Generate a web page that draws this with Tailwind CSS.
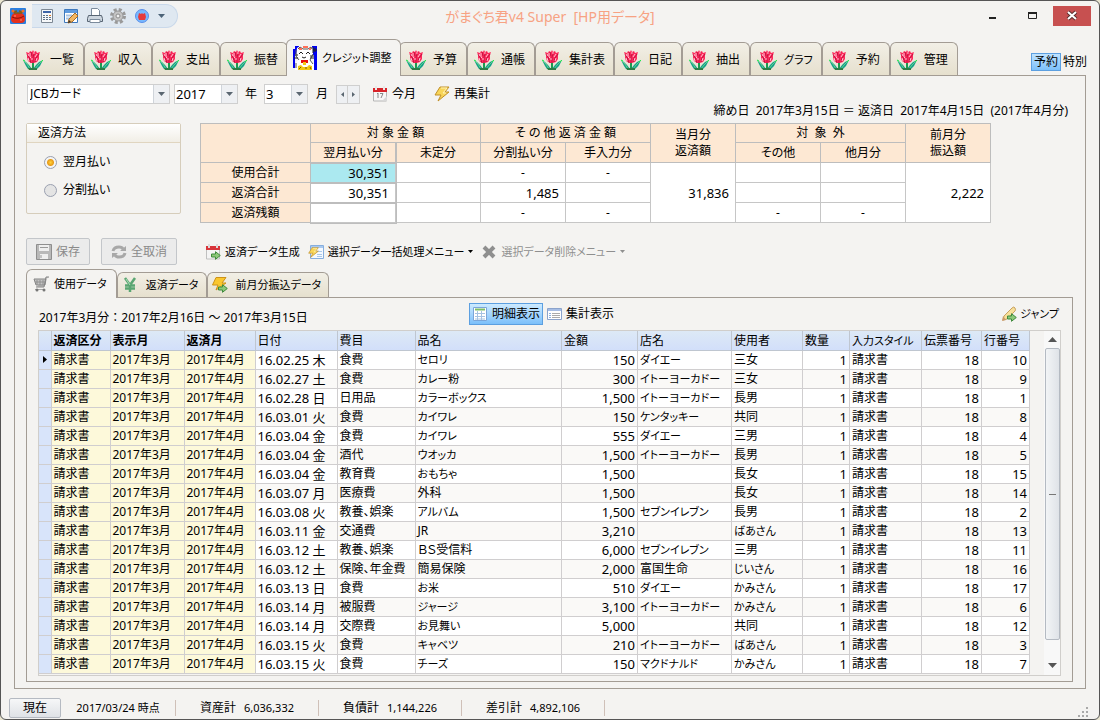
<!DOCTYPE html>
<html lang="ja">

<head>
  <meta charset="UTF-8" />
  <meta name="viewport" content="width=device-width, initial-scale=1.0" />
  <title>がまぐち君v4 Super [HP用データ]</title>
  <script src="https://cdn.jsdelivr.net/npm/@tailwindcss/browser@4"></script>
</head>

<body class="bg-[#e9e5d0] font-['Noto_Sans','Noto_Sans_CJK_JP',sans-serif] text-xs leading-4 text-black [font-feature-settings:'palt']">

  <!-- Shared icons -->
  <svg class="hidden">
    <symbol id="tulip" viewBox="0 0 20 20">
      <path d="M10 11v8" stroke="#1c9a50" stroke-width="2" />
      <path d="M0 10l3 2 3 3 3 4H5l-2-3z" fill="#14a088" />
      <path d="M20 10l-4 2-3 3-3 4h4l3-3z" fill="#14a088" />
      <path d="M1 11l3 3 3 5M19 11l-4 4-3 4" stroke="#5fd08c" fill="none" />
      <path d="M18 12l2-2M0 10l2 1" stroke="#22ee44" />
      <path d="M5 18h9v2H6z" fill="#2c7d46" />
      <path d="M3 2l3 1 1-2 2 1 1-2 1 2 2-1 1 2 3-1-1 3v4l-2 3-3 1H8l-3-2-1-3V5z" fill="#ff2a5c" />
      <path d="M4 4l2 3 2 6M16 4l-3 4-1 4M8 2l1 4M12 2l-2 5v6" stroke="#c01440" fill="none" />
      <path d="M5 4l1 2M7 3v4l1 1M11 2v2M14 4l-2 3M14 8l-1 3M9 8v2M5 8l1 3" stroke="#ffc0d0" fill="none" />
    </symbol>
    <symbol id="down" viewBox="0 0 7 4"><path d="M0 0h7L3.5 4z" fill="currentColor" /></symbol>
    <symbol id="bolt" viewBox="0 0 16 16">
      <path d="M6 1h9l-4 5h4L4 15l3-6H1z" fill="#f8d558" stroke="#c08f28" />
      <path d="M7 2h6L9 7h3" stroke="#fff3b8" fill="none" />
    </symbol>
    <symbol id="arrow" viewBox="0 0 10 9">
      <path d="M.5 3h4V.7L9.3 4.500 4.500 8.300V6h-4z" fill="#8cc878" stroke="#3f8a3c" />
    </symbol>
  </svg>

  <div class="flex h-screen flex-col overflow-hidden rounded-md border border-[#555] bg-[#f4f3f1]">

    <!-- Title bar -->
    <header class="grid h-[38px] shrink-0 grid-cols-[1fr_auto_1fr] items-start">
      <div class="flex items-center gap-[6px] pt-[3px] pl-[9px]">
        <svg class="size-4" viewBox="0 0 16 16">
          <rect width="16" height="16" rx="1" fill="#2a7fe0" />
          <path d="M4 5q-3 2-3 6 0 4 4 4h6q4 0 4-4 0-4-3-6z" fill="#e5301c" />
          <path d="M2 9q6 3 12-1" stroke="#8e1208" fill="none" />
          <path d="M3 4l4-1M13 4L9 3M4 5h8" stroke="#7d5d18" stroke-width="1.500" />
          <circle cx="3" cy="3" r="1.500" fill="#f0702a" /><circle cx="13" cy="3" r="1.500" fill="#f0702a" />
          <path d="M4 8h2M10 12h2" stroke="#ff8a70" />
        </svg>
        <nav class="flex h-6 w-[146px] items-center justify-between rounded-r-full border-y border-r border-[#c9d8ea] bg-[#dfe8f1] pr-3 pl-[7px]">
          <button aria-label="電卓">
            <svg class="size-4" viewBox="0 0 16 16">
              <path d="M2.500 1.500h11v13h-11z" fill="#f6f8fa" stroke="#7d8894" />
              <path d="M4 3h8v2H4z" fill="#3f66a8" />
              <path d="M4 7.500h2M7 7.500h2M4 9.500h2M7 9.500h2M4 11.500h2M7 11.500h2M10 9.500h2M10 11.500h2" stroke="#5f7186" />
              <path d="M10 7.500h2" stroke="#e07820" />
            </svg>
          </button>
          <button aria-label="メモ">
            <svg class="size-4" viewBox="0 0 16 16">
              <path d="M1.500 1.500h13v13h-13z" fill="#fff" stroke="#3d78bd" />
              <path d="M2 2h12v3H2z" fill="#5e9ade" />
              <path d="M3 7.500h6M3 10.500h4" stroke="#a8c4e4" stroke-width="2" />
              <path d="M5 15l1-4 6-6 3 3-6 6z" fill="#f2b662" stroke="#a66a24" />
              <path d="M5 15l1-3 2 2z" fill="#333" />
            </svg>
          </button>
          <button aria-label="印刷">
            <svg class="size-4" viewBox="0 0 16 16">
              <path d="M4.500 7.500v-7h6l2 2v5" fill="#fff" stroke="#7b8b9c" />
              <path d="M1.500 7.500h13l1 3v3H.5v-3z" fill="#cdd6df" stroke="#586573" />
              <path d="M3 11.500h10v3H3z" fill="#fff" stroke="#7b8b9c" />
            </svg>
          </button>
          <button aria-label="設定">
            <svg class="size-4" viewBox="0 0 16 16">
              <circle cx="8" cy="8" r="6.500" fill="none" stroke="#9a9a9a" stroke-width="3" stroke-dasharray="3 2.100" />
              <circle cx="8" cy="8" r="5" fill="#c4c4c4" stroke="#969696" />
              <circle cx="8" cy="8" r="2" fill="#f0f0f0" stroke="#8c8c8c" />
            </svg>
          </button>
          <button aria-label="がまぐち">
            <svg class="size-4" viewBox="0 0 16 16">
              <circle cx="8" cy="8" r="6.500" fill="#77b8ff" stroke="#5b8fe8" />
              <path d="M5 5l2 1 1-1 1 1 2-1 1 4-1 3H5L4 9z" fill="#e63a3c" />
            </svg>
          </button>
          <button aria-label="カスタマイズ" class="text-[#4c6378]"><svg class="h-1 w-[7px]"><use href="#down" /></svg></button>
        </nav>
      </div>
      <h1 class="pt-[6px] text-sm leading-5 text-[#f7a283]">がまぐち君v4 Super&nbsp; [HP用データ]</h1>
      <div class="flex items-start justify-end pt-[5px] pr-2">
        <button aria-label="最小化" class="flex h-5 w-10 items-center justify-center"><svg class="h-3 w-4" viewBox="0 0 16 12"><path d="M4 7h7v2H4z" fill="#222" /></svg></button>
        <button aria-label="最大化" class="flex h-5 w-10 items-center justify-center"><svg class="h-3 w-4" viewBox="0 0 16 12"><path d="M3.500 3v5.500h8V3" fill="none" stroke="#222" /><path d="M3 2h9v2H3z" fill="#222" /></svg></button>
        <button aria-label="閉じる" class="flex h-5 w-[38px] items-center justify-center bg-[#c75050]">
          <svg class="h-3 w-3" viewBox="0 0 12 12"><path d="M2 2l8 7M10 2L2 9" stroke="#5c3030" stroke-width="4" /><path d="M2 2l8 7M10 2L2 9" stroke="#fff" stroke-width="2" /></svg>
        </button>
      </div>
    </header>

    <!-- Main tabs -->
    <div class="flex h-9 shrink-0 items-end pr-[10px] pl-[15px]">
      <div id="mainTabs" class="z-10 flex items-end" role="tablist"></div>
      <div class="mb-1 ml-auto flex items-center">
        <button class="h-[18px] border border-[#5c9fe0] bg-linear-to-b from-[#bfe3ff] to-[#7cc0fa] px-[2px] leading-4">予約</button>
        <button class="h-[18px] px-[2px] leading-4">特別</button>
      </div>
    </div>

    <main class="mx-[13px] flex min-h-0 flex-1 flex-col border border-[#a39c94] pt-2 pr-3 pb-[6px] pl-[11px]">

      <!-- Period selection -->
      <div class="flex h-5 shrink-0 items-center pl-px whitespace-nowrap">
        <div class="flex h-5 w-[143px] items-center border border-[#cfcfcf] bg-white">
          <select aria-label="カード" class="h-full min-w-0 flex-1 appearance-none pl-[2px]"><option>JCBカード</option></select>
          <span class="flex h-full w-4 items-center justify-center border-l border-[#cfd4da] bg-[#eef0f3] text-[#5a6670]"><svg class="h-1 w-[7px]"><use href="#down" /></svg></span>
        </div>
        <div class="ml-1 flex h-5 w-16 items-center border border-[#cfcfcf] bg-white">
          <select id="year" class="h-full min-w-0 flex-1 appearance-none pl-px text-[13px]"><option>2017</option></select>
          <span class="flex h-full w-4 items-center justify-center border-l border-[#cfd4da] bg-[#eef0f3] text-[#5a6670]"><svg class="h-1 w-[7px]"><use href="#down" /></svg></span>
        </div>
        <label for="year" class="px-[7px]">年</label>
        <div class="flex h-5 w-11 items-center border border-[#cfcfcf] bg-white">
          <select id="month" class="h-full min-w-0 flex-1 appearance-none pl-px text-[13px]"><option>3</option></select>
          <span class="flex h-full w-4 items-center justify-center border-l border-[#cfd4da] bg-[#eef0f3] text-[#5a6670]"><svg class="h-1 w-[7px]"><use href="#down" /></svg></span>
        </div>
        <label for="month" class="px-2">月</label>
        <div class="flex h-[19px] border border-[#cfcfcf] bg-[#eef0f3]">
          <button aria-label="前月" class="flex w-[11px] items-center justify-center border-r border-[#cfcfcf]"><svg class="h-[5px] w-[3px]" viewBox="0 0 3 5"><path d="M3 0v5L0 2.500z" fill="#5a6670" /></svg></button>
          <button aria-label="翌月" class="flex w-[11px] items-center justify-center"><svg class="h-[5px] w-[3px]" viewBox="0 0 3 5"><path d="M0 0v5l3-2.500z" fill="#5a6670" /></svg></button>
        </div>
        <button class="ml-3 flex items-center gap-1">
          <svg class="size-4" viewBox="0 0 16 16">
            <path d="M1.500 4h13v11h-13z" fill="#f7f7f7" stroke="#b5b5b5" />
            <path d="M1 2h14v4H1z" fill="#d8242a" />
            <path d="M4 0v4M12 0v4" stroke="#e8e8e8" stroke-width="2" />
            <path d="M5 8l1-1v5M8 7.500h3L9 12" stroke="#888" fill="none" />
            <path d="M10 15l5-5v5z" fill="#d8d8d8" />
          </svg>今月
        </button>
        <button class="ml-[18px] flex items-center gap-1"><svg class="size-4"><use href="#bolt" /></svg>再集計</button>
      </div>
      <p class="h-[14px] shrink-0 pr-[5px] text-right leading-[14px] [font-feature-settings:normal]">締め日&nbsp; 2017年3月15日 ＝ 返済日&nbsp; 2017年4月15日&nbsp; (2017年4月分)</p>

      <!-- Summary -->
      <div class="mt-[5px] flex shrink-0 items-start gap-[19px]">
        <fieldset class="h-[91px] w-[155px] rounded-xs border border-[#d6cdbb]">
          <div class="h-[19px] border-b border-[#e0d5c0] bg-linear-to-b from-white to-[#f1eee6] pl-[11px] leading-[18px]">返済方法</div>
          <div class="flex flex-col gap-3 pt-[11px] pl-[17px]">
            <label class="flex items-center gap-[6px]"><input type="radio" name="method" checked class="size-[13px] appearance-none rounded-full border border-[#9aa0b0] bg-[#e9eaec] checked:bg-[radial-gradient(circle,#ffd23a_0,#e89b18_3px,#f4f4f4_4px)]" />翌月払い</label>
            <label class="flex items-center gap-[6px]"><input type="radio" name="method" class="size-[13px] appearance-none rounded-full border border-[#9aa0b0] bg-[#e4e4e4] checked:bg-[radial-gradient(circle,#ffd23a_0,#e89b18_3px,#f4f4f4_4px)]" />分割払い</label>
          </div>
        </fieldset>

        <table class="w-[791px] table-fixed border-collapse bg-white text-center [&_td]:border [&_td]:border-[#c6c6c6] [&_td]:p-0 [&_th]:border [&_th]:border-[#bdbdbd] [&_th]:bg-[#fde8d3] [&_th]:p-0 [&_th]:font-normal">
          <colgroup><col class="w-[110px]" /><col span="8" class="w-[85px]" /></colgroup>
          <thead>
            <tr class="h-[19px]">
              <th rowspan="2"></th>
              <th colspan="2">対 象 金 額</th>
              <th colspan="2">そ の 他 返 済 金 額</th>
              <th rowspan="2">当月分<br />返済額</th>
              <th colspan="2">対&nbsp; 象&nbsp; 外</th>
              <th rowspan="2">前月分<br />振込額</th>
            </tr>
            <tr class="h-5">
              <th class="outline-1 outline-[#bdbdbd]">翌月払い分</th><th>未定分</th><th>分割払い分</th><th>手入力分</th><th>その他</th><th>他月分</th>
            </tr>
          </thead>
          <tbody>
            <tr class="h-5">
              <th>使用合計</th>
              <td class="bg-[#abe9f0] text-right text-[13px] outline-1 outline-[#bdbdbd]"><span class="pr-[6px]">30,351</span></td>
              <td></td><td>-</td><td>-</td>
              <td rowspan="3" class="text-right text-[13px]"><span class="pr-[6px]">31,836</span></td>
              <td></td><td></td>
              <td rowspan="3" class="text-right text-[13px]"><span class="pr-[6px]">2,222</span></td>
            </tr>
            <tr class="h-5">
              <th>返済合計</th>
              <td class="text-right text-[13px] outline-1 outline-[#bdbdbd]"><span class="pr-[6px]">30,351</span></td>
              <td></td><td class="text-right text-[13px]"><span class="pr-[6px]">1,485</span></td><td></td><td></td><td></td>
            </tr>
            <tr class="h-5">
              <th>返済残額</th>
              <td class="outline-1 outline-[#bdbdbd]"></td><td></td><td>-</td><td>-</td><td>-</td><td>-</td>
            </tr>
          </tbody>
        </table>
      </div>

      <!-- Actions -->
      <div class="mt-[15px] flex h-[27px] shrink-0 items-center whitespace-nowrap">
        <button disabled class="flex h-[27px] w-16 items-center justify-center gap-1 rounded-xs border border-[#c3c6ca] bg-[#ebebeb] text-[#8a8a8a]">
          <svg class="size-4" viewBox="0 0 16 16"><path d="M.5.5h15v15H.5z" fill="#b8b8b8" stroke="#8e8e8e" /><path d="M3 1h10v6H3zM4 10h8v5H4z" fill="#eee" /><path d="M4 3.500h8M5 11v3" stroke="#999" /></svg>保存
        </button>
        <button disabled class="ml-[11px] flex h-[27px] w-[76px] items-center justify-center gap-1 rounded-xs border border-[#c3c6ca] bg-[#ebebeb] text-[#8a8a8a]">
          <svg class="size-4" viewBox="0 0 16 16"><path d="M2 7q1-4 6-4 3 0 4 2M14 9q-1 4-6 4-3 0-4-2" fill="none" stroke="#a8a8a8" stroke-width="3" /><path d="M9 7h6V2zM7 9H1v5z" fill="#a8a8a8" /></svg>全取消
        </button>
        <button class="ml-7 flex items-center gap-1">
          <svg class="size-4" viewBox="0 0 16 16">
            <path d="M1.500 4h13v11h-13z" fill="#f4f4f4" stroke="#c0c0c0" />
            <path d="M1 2h14v4H1z" fill="#d8343a" />
            <path d="M4 0v4M12 0v4" stroke="#dcdcdc" stroke-width="2" />
            <use href="#arrow" x="6" y="7" width="10" height="9" />
          </svg><span class="text-[11px]">返済データ生成</span>
        </button>
        <button class="ml-2 flex items-center gap-1">
          <svg class="size-4" viewBox="0 0 16 16">
            <path d="M2.500 1.500h13v13h-13z" fill="#f5f9ff" stroke="#86aede" />
            <path d="M3 2h12v2H3z" fill="#a9c9f0" />
            <path d="M9 7.500h5M9 10.500h5M9 12.500h5" stroke="#aac8ea" />
            <use href="#bolt" x="0" y="3" width="11" height="11" />
          </svg><span class="text-[11px]">選択データ一括処理メニュー</span><svg class="h-[3px] w-[5px]" viewBox="0 0 5 3"><path d="M0 0h5L2.500 3z" /></svg>
        </button>
        <button disabled class="ml-2 flex items-center gap-1 text-[#8f8f8f]">
          <svg class="size-4" viewBox="0 0 16 16"><path d="M3 3l10 10M13 3L3 13" stroke="#8f8f8f" stroke-width="4" /></svg><span class="text-[11px]">選択データ削除メニュー</span><svg class="h-[3px] w-[5px]" viewBox="0 0 5 3"><path d="M0 0h5L2.500 3z" fill="currentColor" /></svg>
        </button>
      </div>

      <!-- Data tabs -->
      <div class="z-10 mt-1 flex h-7 shrink-0 items-end text-[11px] whitespace-nowrap" role="tablist">
        <button role="tab" aria-selected="true" class="-mb-px flex h-[29px] items-center gap-[5px] rounded-t-md border border-b-0 border-[#a39c94] bg-[#f4f3f1] px-[6px] pr-[9px]">
          <svg class="size-4" viewBox="0 0 16 16"><path d="M16 1h-3l-2 10H3M1 3h12L12 9H3z" fill="#c4c4c4" stroke="#858585" /><path d="M4 4v5M7 4v5M10 4v5M2 6h10" stroke="#909090" /><path d="M2 13.500h10" stroke="#aaa" /><circle cx="4" cy="14" r="1.500" fill="#777" /><circle cx="11" cy="14" r="1.500" fill="#777" /></svg>使用データ
        </button>
        <button role="tab" class="flex h-[25px] items-center gap-2 rounded-t-md border border-b-0 border-[#a39c94] bg-linear-to-b from-[#f2efe6] to-[#e6e0ce] px-1 pr-[7px]">
          <svg class="size-4" viewBox="0 0 16 16"><path d="M3 1l5 7 5-7M8 8v7M3 8.500h10M3 11.500h10" fill="none" stroke="#5aa672" stroke-width="2.500" /><path d="M4 2l4 6" stroke="#a8dcb4" /></svg>返済データ
        </button>
        <button role="tab" class="flex h-[25px] items-center gap-2 rounded-t-md border border-b-0 border-[#a39c94] bg-linear-to-b from-[#f2efe6] to-[#e6e0ce] px-1 pr-[7px]">
          <svg class="size-4" viewBox="0 0 16 16"><path d="M4 .5h10L10 6h4L4 13l2-5H.5z" fill="#fac72e" stroke="#cc9218" /><use href="#arrow" x="6" y="7" width="10" height="9" /></svg>前月分振込データ
        </button>
      </div>

      <section class="flex min-h-0 flex-1 flex-col border border-[#a39c94] pr-[11px] pb-[5px] pl-[11px]">
        <div class="grid h-8 shrink-0 grid-cols-[1fr_auto_1fr] items-center whitespace-nowrap">
          <p class="self-end pb-1 pl-px [font-feature-settings:normal]">2017年3月分：2017年2月16日 ～ 2017年3月15日</p>
          <div class="flex items-center pr-2">
            <button class="flex h-[22px] items-center gap-1 border border-[#5c9fe0] bg-linear-to-b from-[#cdeaff] to-[#7cc0fa] px-[2px]">
              <svg class="size-4" viewBox="0 0 16 16"><path d="M1.500 1.500h13v13h-13z" fill="#fff" stroke="#7ba6d8" /><path d="M3 3.500h10" stroke="#7fbe68" stroke-width="2" /><path d="M3 7.500h10M3 10.500h10M3 13h10M5.500 5v9M9.500 5v9" stroke="#a5c2e2" /></svg>明細表示
            </button>
            <button class="flex h-[22px] items-center gap-1 px-[3px] pr-2">
              <svg class="size-4" viewBox="0 0 16 16"><path d="M1.500 2.500h14v11h-14z" fill="#fff" stroke="#8ba3cc" /><path d="M2 3h13v2H2z" fill="#a6bde4" /><path d="M6 7.500h8M6 9.500h8M6 11.500h8" stroke="#aaa" /><path d="M3 7.500h2M3 9.500h2M3 11.500h2" stroke="#8bb0e0" /></svg>集計表示
            </button>
          </div>
          <button class="flex items-center gap-[3px] justify-self-end pr-[2px] text-[11px]">
            <svg class="size-4" viewBox="0 0 16 16"><path d="M2 14l1-4 8-8q2-2 3 0t0 3l-8 8z" fill="#f8e09a" stroke="#c7a060" /><path d="M1 15l1-5 3 4z" fill="#c99a68" /><use href="#arrow" x="6" y="7" width="10" height="9" /></svg>ジャンプ
          </button>
        </div>

        <!-- Grid -->
        <div class="flex min-h-0 flex-1 overflow-hidden border border-[#d0cecb]">
          <div class="min-w-0 flex-1 overflow-hidden">
            <table class="w-full table-fixed border-collapse whitespace-nowrap">
              <colgroup>
                <col class="w-3" /><col class="w-[59px]" /><col class="w-[74px]" /><col class="w-[71px]" /><col class="w-[82px]" />
                <col class="w-[78px]" /><col /><col class="w-[76px]" /><col class="w-[94px]" /><col class="w-[71px]" />
                <col class="w-[47px]" /><col class="w-[72px]" /><col class="w-[60px]" /><col class="w-12" />
              </colgroup>
              <thead>
                <tr class="h-[19px] bg-linear-to-b from-[#dde9f6] to-[#d2dffa] text-left [&>th]:overflow-hidden [&>th]:border-r [&>th]:border-b [&>th]:border-[#bfc6d0] [&>th]:p-0 [&>th]:pt-[2px] [&>th]:pl-[2px]">
                  <th></th><th>返済区分</th><th>表示月</th><th>返済月</th>
                  <th class="font-normal">日付</th><th class="font-normal">費目</th><th class="font-normal">品名</th><th class="font-normal">金額</th>
                  <th class="font-normal">店名</th><th class="font-normal">使用者</th><th class="font-normal">数量</th><th class="text-[11px] font-normal">入力スタイル</th>
                  <th class="font-normal">伝票番号</th><th class="font-normal">行番号</th>
                </tr>
              </thead>
              <tbody id="rows"></tbody>
            </table>
          </div>
          <div class="ml-[14px] flex w-4 flex-col items-center bg-[#f8f8f8]">
            <button aria-label="上へ" class="flex h-[17px] w-full items-center justify-center"><svg class="h-[5px] w-[9px]" viewBox="0 0 9 5"><path d="M0 5h9L4.500 0z" fill="#555" /></svg></button>
            <div class="flex w-[15px] flex-1 items-center justify-center rounded-xs border border-[#b4bac2] bg-linear-to-r from-[#f2f4f6] to-[#dfe3e8]"><span class="h-px w-[7px] bg-[#777]"></span></div>
            <button aria-label="下へ" class="mb-px flex h-[34px] w-full items-center justify-center pt-4"><svg class="h-[5px] w-[9px]" viewBox="0 0 9 5"><path d="M0 0h9L4.500 5z" fill="#555" /></svg></button>
          </div>
        </div>
      </section>
    </main>

    <!-- Status bar -->
    <footer class="flex h-[30px] shrink-0 items-center pt-2 pl-2 text-[11px] whitespace-nowrap">
      <button class="h-5 w-[52px] rounded-xs border border-[#b5bac2] bg-linear-to-b from-[#f6f7f8] to-[#dfe2e6] text-xs">現在</button>
      <span class="w-[114px] text-center">2017/03/24 時点</span>
      <span class="flex w-[143px] justify-center gap-2 border-l border-[#cfc0b8]"><span class="text-xs">資産計</span><span>6,036,332</span></span>
      <span class="flex w-[143px] justify-center gap-2 border-l border-[#cfc0b8]"><span class="text-xs">負債計</span><span>1,144,226</span></span>
      <span class="flex w-[144px] justify-center gap-2 border-x border-[#cfc0b8]"><span class="text-xs">差引計</span><span>4,892,106</span></span>
      <svg class="mr-[9px] ml-auto size-3 self-end" viewBox="0 0 12 12"><path d="M8 0h2v2H8zM4 4h2v2H4zM8 4h2v2H8zM0 8h2v2H0zM4 8h2v2H4zM8 8h2v2H8z" fill="#a9a9a9" /></svg>
    </footer>
  </div>

  <script>
    const tabs = ["一覧", "収入", "支出", "振替", "クレジット調整", "予算", "通帳", "集計表", "日記", "抽出", "グラフ", "予約", "管理"];

    const cat = `
      <svg class="size-6 shrink-0" viewBox="0 0 24 24">
        <path d="M2 0h4v2H4v6H2v14H0V3h2zM19 0h5v24h-3V9h-2z" fill="#0000f0"/>
        <path d="M4 2l3-2 3 2h5l3-2 2 2v8l-2 4 3 4v6H2v-6l3-4-2-4z" fill="#fff"/>
        <path d="M5 3l2-2 3 2h5l3-2 1 2M3 4v6l3 4M20 8l-3 6 3 4M3 17v5" stroke="#555" fill="none"/>
        <path d="M6 2h3v2H6zM16 2h2v2h-2zM10 0h5v2h-5z" fill="#ff7058"/>
        <path d="M6 8l2-2 2 2M13 8l2-2 2 2M9 11l2 1 2-1M2 9h3M1 12h4M17 10h4M17 12h4" stroke="#222" fill="none"/>
        <path d="M8 14h7v3H8z" fill="#e81010"/>
        <path d="M10 16h3v3h-3zM5 20l3-1 2 2h4l2-2 3 1v4H5z" fill="#f2c812"/>
        <path d="M6 23l2-2M12 22h2M17 21l1 2" stroke="#7a5c00"/>
        <path d="M20 1v6M22 2v4M20 4h4" stroke="#222"/>
      </svg>`;
    const tulip = `<svg class="h-5 w-5 shrink-0"><use href="#tulip" /></svg>`;

    document.getElementById("mainTabs").innerHTML = tabs.map((name, i) => i === 4
      ? `<button role="tab" aria-selected="true" class="z-10 -mx-0.5 -mb-px flex h-[37px] w-[115px] items-center gap-[5px] rounded-t-md border border-b-0 border-[#a39c94] bg-[#f4f3f1] pl-[6px] text-[11px] whitespace-nowrap">${cat}${name}</button>`
      : `<button role="tab" class="flex h-[33px] min-w-17 items-center gap-[7px] rounded-t-md border border-b-0 border-[#a39c94] bg-linear-to-b from-[#f2efe6] to-[#e6e0ce] pt-[2px] pr-2 pl-[6px] whitespace-nowrap">${tulip}<span class="${name === "グラフ" ? "text-[11px]" : "text-xs"}">${name}</span></button>`
    ).join("");

    // 日付, 費目, 品名, 金額, 店名, 使用者, 行番号
    const items = [
      ["16.02.25 木", "食費", "セロリ", "150", "ダイエー", "三女", 10],
      ["16.02.27 土", "食費", "カレー粉", "300", "イトーヨーカドー", "三女", 9],
      ["16.02.28 日", "日用品", "カラーボックス", "1,500", "イトーヨーカドー", "長男", 1],
      ["16.03.01 火", "食費", "カイワレ", "150", "ケンタッキー", "共同", 8],
      ["16.03.04 金", "食費", "カイワレ", "555", "ダイエー", "三男", 4],
      ["16.03.04 金", "酒代", "ウオッカ", "1,500", "イトーヨーカドー", "長男", 5],
      ["16.03.04 金", "教育費", "おもちゃ", "1,500", "", "長女", 15],
      ["16.03.07 月", "医療費", "外科", "1,500", "", "長女", 14],
      ["16.03.08 火", "教養、娯楽", "アルバム", "1,500", "セブンイレブン", "長男", 2],
      ["16.03.11 金", "交通費", "JR", "3,210", "", "ばあさん", 13],
      ["16.03.12 土", "教養、娯楽", "ＢＳ受信料", "6,000", "セブンイレブン", "三男", 11],
      ["16.03.12 土", "保険、年金費", "簡易保険", "2,000", "富国生命", "じいさん", 16],
      ["16.03.13 日", "食費", "お米", "510", "ダイエー", "かみさん", 17],
      ["16.03.14 月", "被服費", "ジャージ", "3,100", "イトーヨーカドー", "かみさん", 6],
      ["16.03.14 月", "交際費", "お見舞い", "5,000", "", "共同", 12],
      ["16.03.15 火", "食費", "キャベツ", "210", "イトーヨーカドー", "ばあさん", 3],
      ["16.03.15 火", "食費", "チーズ", "150", "マクドナルド", "かみさん", 7]
    ];

    // カナは一回り小さく
    const size = v => /[ぁ-ヶ]/.test(v) ? "text-[11px]" : "text-xs";
    const text = v => `<td class="pt-px pl-[2px] ${size(v)}">${v}</td>`;
    const num = v => `<td class="pr-[2px] text-right text-[13px]">${v}</td>`;
    const yellow = v => `<td class="bg-[#fdf9da] pt-px pl-[2px]">${v}</td>`;

    document.getElementById("rows").innerHTML = items.map(([date, kind, name, price, shop, user, line], i) => `
      <tr class="h-[19px] bg-white even:bg-[#faf9f7] [&>td]:overflow-hidden [&>td]:border-r [&>td]:border-b [&>td]:border-[#d0cecf] [&>td]:pb-0">
        <td class="bg-[#d8e4fa] pl-1">${i === 0 ? '<svg class="h-[7px] w-1" viewBox="0 0 4 7"><path d="M0 0v7l4-3.500z"/></svg>' : ""}</td>
        ${yellow("請求書")}${yellow("2017年3月")}${yellow("2017年4月")}
        <td class="pl-[2px] text-[13px]">${date}</td>
        ${text(kind)}${text(name)}${num(price)}${text(shop)}${text(user)}${num(1)}${text("請求書")}${num(18)}${num(line)}
      </tr>`).join("");
  </script>
</body>

</html>
